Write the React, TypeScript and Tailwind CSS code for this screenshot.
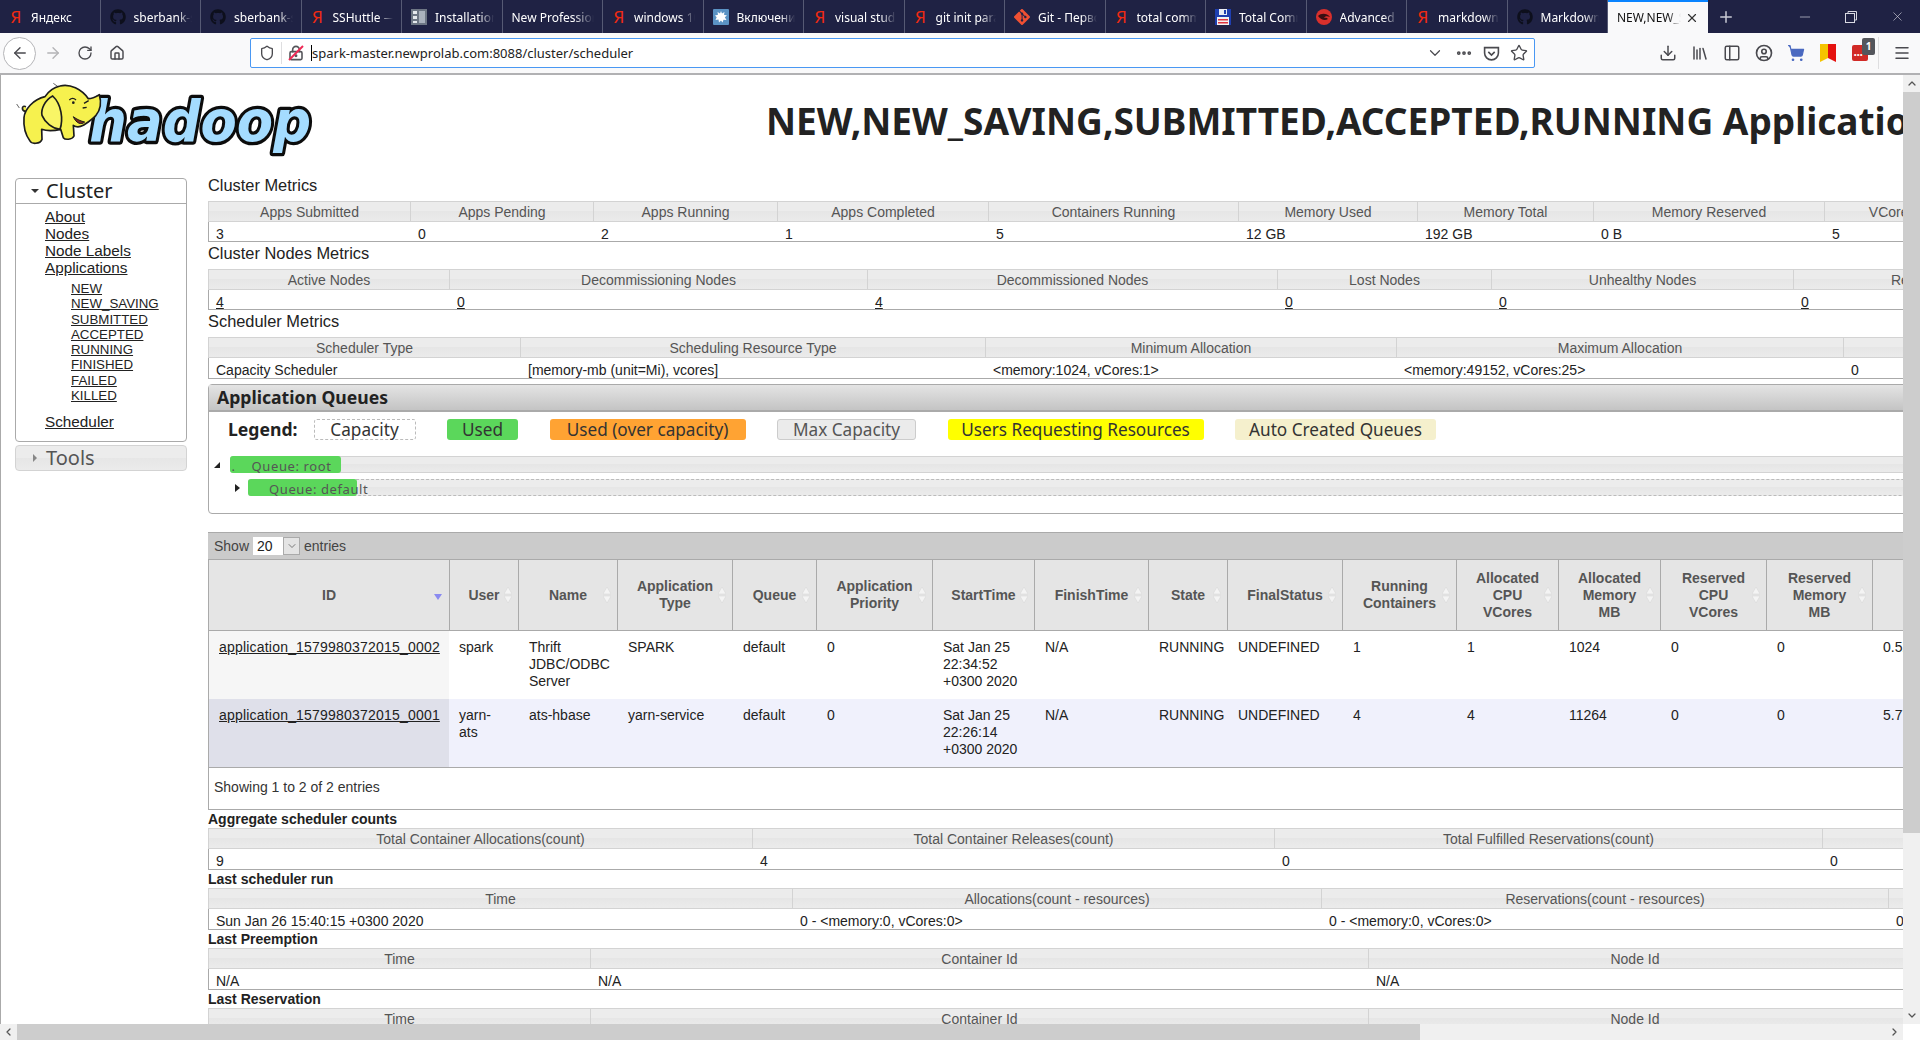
import { ReactNode } from 'react';
import {
  ArrowLeft,
  ArrowRight,
  ChevronDown,
  ChevronLeft,
  ChevronRight,
  ChevronUp,
  CircleUser,
  Download,
  Ellipsis,
  Home,
  Library,
  LockKeyhole,
  Menu,
  Minus,
  PanelLeft,
  Plus,
  RotateCw,
  Shield,
  ShoppingCart,
  Star,
  X,
} from 'lucide-react';
import { FaGithub } from 'react-icons/fa';
import { SiGit } from 'react-icons/si';

type TabIcon = 'ya' | 'gh' | 'docs' | 'none' | 'splash' | 'git' | 'floppy' | 'adv';

const tabs: { title: string; icon: TabIcon }[] = [
  { title: 'Яндекс', icon: 'ya' },
  { title: 'sberbank-school', icon: 'gh' },
  { title: 'sberbank-school', icon: 'gh' },
  { title: 'SSHuttle — documentation', icon: 'ya' },
  { title: 'Installation guide', icon: 'docs' },
  { title: 'New Profession', icon: 'none' },
  { title: 'windows 10 terminal', icon: 'ya' },
  { title: 'Включение подсистемы', icon: 'splash' },
  { title: 'visual studio code', icon: 'ya' },
  { title: 'git init parameters', icon: 'ya' },
  { title: 'Git - Первоначальная', icon: 'git' },
  { title: 'total commander', icon: 'ya' },
  { title: 'Total Commander', icon: 'floppy' },
  { title: 'Advanced tips', icon: 'adv' },
  { title: 'markdown syntax', icon: 'ya' },
  { title: 'Markdown guide', icon: 'gh' },
];

function TabGlyph({ icon }: { icon: TabIcon }) {
  if (icon === 'ya') return <span className="w-[14px] flex-none text-center text-[17px] leading-none text-[#f02a12]">Я</span>;
  if (icon === 'gh') return <FaGithub className="h-4 w-4 flex-none text-[#0d0f1c]" />;
  if (icon === 'git') return <SiGit className="h-4 w-4 flex-none text-[#f05033]" />;
  if (icon === 'docs') {
    return (
      <svg viewBox="0 0 16 16" className="h-4 w-4 flex-none">
        <rect width="16" height="16" fill="#6d7684" />
        <rect x="2" y="2" width="4" height="3" fill="#e6e9ee" />
        <rect x="2" y="7" width="4" height="3" fill="#e6e9ee" />
        <rect x="2" y="12" width="4" height="2" fill="#e6e9ee" />
        <rect x="8" y="2" width="6" height="12" fill="#aab2bd" />
      </svg>
    );
  }
  if (icon === 'splash') {
    return (
      <svg viewBox="0 0 16 16" className="h-4 w-4 flex-none">
        <rect width="16" height="16" rx="1" fill="#5b93c4" />
        <path d="M8 2l1 2.5L11.500 3l-.5 2.800L14 6.500l-2.200 1.700L13.500 11l-3-.3L9.500 13.500 8 11.500 6 13.500l-.5-3L2.500 11l1.200-2.800L2 6.500l3-.7L4.500 3 7 4.500z" fill="#fff" />
      </svg>
    );
  }
  if (icon === 'floppy') {
    return (
      <svg viewBox="0 0 16 16" className="h-4 w-4 flex-none">
        <rect width="16" height="16" fill="#1f3fb0" />
        <rect x="4" y="0" width="8" height="6" fill="#e8ecf5" />
        <rect x="9" y="1" width="2" height="4" fill="#1f3fb0" />
        <rect x="2" y="8" width="12" height="8" fill="#f2f2f2" />
        <rect x="3" y="10" width="10" height="1.500" fill="#e0343f" />
        <rect x="3" y="13" width="10" height="1.500" fill="#e0343f" />
      </svg>
    );
  }
  if (icon === 'adv') {
    return (
      <svg viewBox="0 0 16 16" className="h-4 w-4 flex-none">
        <circle cx="8" cy="8" r="8" fill="#d9302c" />
        <path d="M2 7c3-3 9-3 12 1-3-1.500-5-1-6 1 2-.5 3 0 4 1-3 2-7 1-10-3z" fill="#3b0f12" />
      </svg>
    );
  }
  return null;
}

function TabBar() {
  return (
    <div className="flex h-[33px] flex-none items-stretch bg-[#1f2244] font-['Noto_Sans',sans-serif] text-[12px] text-white">
      {tabs.map((tab, i) => (
        <div key={i} className="flex w-[100.500px] flex-none items-center gap-[8px] border-r border-[#565a74] pl-[9px] pr-2">
          <TabGlyph icon={tab.icon} />
          <span className="min-w-0 flex-1 overflow-hidden whitespace-nowrap pt-[2px] [mask-image:linear-gradient(to_right,black_75%,transparent)]">
            {tab.title}
          </span>
        </div>
      ))}
      <div className="flex w-[100px] flex-none items-center border-t-2 border-[#0a84ff] bg-[#f9f9fa] pl-[9px] pr-[9px] text-[#111]">
        <span className="min-w-0 flex-1 overflow-hidden whitespace-nowrap [mask-image:linear-gradient(to_right,black_80%,transparent)]">
          NEW,NEW_SAVING
        </span>
        <X className="ml-1 h-[14px] w-[14px] flex-none text-[#333]" />
      </div>
      <div className="flex w-[35px] flex-none items-center justify-center">
        <Plus className="h-[18px] w-[18px] text-[#c9cad4]" />
      </div>
      <div className="ml-auto flex flex-none items-center text-[#d8d9e2]">
        <div className="flex w-[46px] justify-center"><Minus className="h-4 w-4" strokeWidth={1} /></div>
        <div className="flex w-[46px] justify-center">
          <svg viewBox="0 0 12 12" className="h-3 w-3" fill="none" stroke="currentColor">
            <rect x="0.500" y="2.500" width="9" height="9" />
            <path d="M3 2.500V.500h8.500V9H9.500" />
          </svg>
        </div>
        <div className="flex w-[46px] justify-center"><X className="h-[15px] w-[15px]" strokeWidth={1} /></div>
      </div>
    </div>
  );
}

function NavBar() {
  return (
    <div className="flex h-[42px] flex-none items-center border-b-2 border-[#b1b1b3] bg-[#f9f9fa] text-[#4a4a4f]">
      <div className="ml-[3px] flex h-[33px] w-[33px] flex-none items-center justify-center rounded-full border border-[#b5b5b8] bg-white">
        <ArrowLeft className="h-[18px] w-[18px]" strokeWidth={1.8} />
      </div>
      <ArrowRight className="ml-[8px] h-[18px] w-[18px] flex-none text-[#b4b4b6]" strokeWidth={1.8} />
      <RotateCw className="ml-[15px] h-4 w-4 flex-none" strokeWidth={2} />
      <Home className="ml-[16px] h-4 w-4 flex-none" strokeWidth={2.2} />

      {/* адресная строка */}
      <div className="ml-[125px] flex h-[30px] w-[1285px] flex-none items-center rounded-[2px] border border-[#4a98f3] bg-white">
        <Shield className="ml-[8px] h-4 w-4 flex-none" strokeWidth={2} />
        <div className="ml-[6px] h-[22px] w-px flex-none bg-[#dedee0]" />
        <div className="relative ml-[6px] h-4 w-4 flex-none">
          <LockKeyhole className="h-4 w-4 text-[#55555a]" strokeWidth={2.4} />
          <svg viewBox="0 0 16 16" className="absolute inset-0 h-4 w-4">
            <line x1="1" y1="15" x2="15" y2="1" stroke="#ee2a55" strokeWidth="2" />
          </svg>
        </div>
        <span className="ml-[7px] h-[16px] w-px flex-none bg-black" />
        <span className="pt-[2px] font-['Noto_Sans',sans-serif] text-[13px] text-[#222]">spark-master.newprolab.com:8088/cluster/scheduler</span>
        <ChevronDown className="ml-auto h-[18px] w-[18px] flex-none" strokeWidth={1.6} />
        <Ellipsis className="ml-[11px] h-[18px] w-[18px] flex-none" strokeWidth={3} />
        <svg viewBox="0 0 16 16" className="ml-[10px] h-[17px] w-[17px] flex-none" fill="none" stroke="currentColor" strokeWidth="1.500">
          <path d="M1.500 2.500h13v5a6.500 6.500 0 0 1-13 0z" />
          <path d="M5 6.500l3 3 3-3" />
        </svg>
        <Star className="ml-[10px] mr-[6px] h-[18px] w-[18px] flex-none" strokeWidth={1.8} />
      </div>

      <Download className="ml-[124px] h-[18px] w-[18px] flex-none" strokeWidth={2} />
      <Library className="ml-[14px] h-[18px] w-[18px] flex-none" strokeWidth={2} />
      <PanelLeft className="ml-[14px] h-[18px] w-[18px] flex-none" strokeWidth={2} />
      <CircleUser className="ml-[14px] h-[18px] w-[18px] flex-none" strokeWidth={2.2} />
      <ShoppingCart className="ml-[14px] h-[18px] w-[18px] flex-none text-[#4a69c0]" fill="#4a69c0" strokeWidth={1.6} />
      <svg viewBox="0 0 16 18" className="ml-[15px] h-[18px] w-4 flex-none">
        <path d="M0 0h8v14l-8 4z" fill="#f5c400" />
        <path d="M8 0h8v18l-8-4z" fill="#e5120f" />
      </svg>
      <div className="relative ml-[16px] h-4 w-4 flex-none rounded-[2px] bg-[#d12a26]">
        <span className="absolute left-[2px] top-[6px] text-[7px] font-bold leading-none tracking-[0.5px] text-white">•••</span>
        <span className="absolute -right-[7px] -top-[7px] flex h-[17px] w-[13px] items-center justify-center rounded-[2px] bg-[#54565c] font-['Noto_Sans',sans-serif] text-[10px] font-bold text-white">1</span>
      </div>
      <div className="ml-[10px] h-[32px] w-px flex-none bg-[#dedee0]" />
      <Menu className="ml-[14px] h-[18px] w-[18px] flex-none" strokeWidth={2} />
    </div>
  );
}

function HadoopLogo() {
  return (
    <svg viewBox="0 0 930 252" className="ml-[9px] mt-[1px] h-[84px] w-[310px] flex-none">
      {/* хвост */}
      <path d="M48 92c-14-6-14 12-2 14l4 18" fill="#f4ef4a" stroke="#222" strokeWidth="5" />
      <path d="M20 84l8 12M130 22l14 10" stroke="#666" strokeWidth="3" />
      {/* надпись */}
      <text
        x="238"
        y="195"
        fontFamily="'DejaVu Sans', sans-serif"
        fontWeight="700"
        fontStyle="italic"
        fontSize="172"
        textLength="665"
        lengthAdjust="spacingAndGlyphs"
        fill="#a4dcff"
        stroke="#0c0c0c"
        strokeWidth="20"
        strokeLinejoin="round"
        paintOrder="stroke"
      >
        hadoop
      </text>
      {/* тело */}
      <path
        d="M150 30C180 22 215 40 235 68C245 68 258 62 268 56C275 80 272 100 258 118C245 132 232 140 220 148C212 152 200 155 190 148L192 180C186 192 165 192 160 185L152 160C130 165 110 165 95 160L96 190C90 205 65 205 60 195C45 175 40 150 42 125C44 100 70 70 105 62C118 42 132 34 150 30Z"
        fill="#f6f14e"
        stroke="#1c1c1c"
        strokeWidth="5"
        strokeLinejoin="round"
      />
      {/* ухо */}
      <path d="M128 60C105 72 92 100 96 118C105 140 128 158 150 160C160 130 155 85 128 60Z" fill="#f9f566" stroke="#1c1c1c" strokeWidth="5" />
      <path d="M178 72c6-6 14-6 20 0M222 82l14-8M218 96l12-2" stroke="#1c1c1c" strokeWidth="4" fill="none" />
      <circle cx="190" cy="80" r="4" fill="#1c1c1c" />
      <path d="M190 122c8 20 24 26 34 16-10-2-24-8-34-16z" fill="#7b2b1c" stroke="#1c1c1c" strokeWidth="3" />
    </svg>
  );
}

function Sidebar() {
  return (
    <div className="ml-[14px] mt-[4px] w-[172px] flex-none">
      <div className="rounded-[4px] border border-[#aaa] pb-[11px]">
        <div className="flex h-[25px] items-center border-b border-[#aaa] pl-[15px] font-['Noto_Sans',sans-serif] text-[20px] text-[#222]">
          <span className="mr-[7px] h-0 w-0 border-x-[4px] border-t-[4px] border-x-transparent border-t-[#333]" />
          Cluster
        </div>
        <ul className="ml-[29px] mt-[4px] text-[15.300px] leading-[17px] text-[#222]">
          <li className="underline">About</li>
          <li className="underline">Nodes</li>
          <li className="underline">Node Labels</li>
          <li className="underline">Applications</li>
          <ul className="ml-[26px] mt-[5px] text-[13.300px] leading-[15.300px]">
            {['NEW', 'NEW_SAVING', 'SUBMITTED', 'ACCEPTED', 'RUNNING', 'FINISHED', 'FAILED', 'KILLED'].map((s) => (
              <li key={s} className="underline">{s}</li>
            ))}
          </ul>
          <li className="mt-[10px] underline">Scheduler</li>
        </ul>
      </div>
      <div className="mt-[3px] flex h-[26px] items-center rounded-[4px] border border-[#d3d3d3] bg-[linear-gradient(#ececec_50%,#e6e6e6_50%,#ebebeb)] pl-[17px] font-['Noto_Sans',sans-serif] text-[20px] text-[#555]">
        <span className="mr-[9px] h-0 w-0 border-y-[4px] border-l-[4px] border-y-transparent border-l-[#888]" />
        Tools
      </div>
    </div>
  );
}

interface MetricTableProps {
  cols: string;
  heads: string[];
  cells: ReactNode[];
  compact?: boolean;
}

const link = (v: string) => <span className="underline">{v}</span>;

function MetricTable({ cols, heads, cells, compact }: MetricTableProps) {
  return (
    <div className="text-[14px]">
      <div className={`grid h-[21px] border-y border-[#d3d3d3] bg-[linear-gradient(#ececec_45%,#e6e6e6_50%,#ebebeb)] text-[#555] ${cols}`}>
        {heads.map((h, i) => (
          <div key={i} className="overflow-hidden whitespace-nowrap border-l border-[#d3d3d3] pt-[1px] text-center leading-[18px]">{h}</div>
        ))}
      </div>
      <div className={`grid border-b border-l border-[#aaa] text-[#222] ${compact ? 'h-[20px]' : 'h-[21px]'} ${cols}`}>
        {cells.map((c, i) => (
          <div key={i} className="overflow-hidden whitespace-nowrap pl-[7px] pt-[3px] leading-[18px]">{c}</div>
        ))}
      </div>
    </div>
  );
}

function Legend({ className, label }: { className: string; label: string }) {
  return <div className={`flex h-[21px] flex-none items-center justify-center whitespace-nowrap rounded-[3px] ${className}`}>{label}</div>;
}

function QueuesPanel() {
  return (
    <div className="mt-[5px] h-[130px] rounded-[4px] border border-[#aaa] font-['Noto_Sans',sans-serif]">
      <div className="flex h-[27px] items-center border-b-2 border-[#aaa] bg-[linear-gradient(#e4e4e4,#c4c4c4)] pl-[8px] text-[17.600px] font-bold text-[#222]">
        Application Queues
      </div>
      <div className="mt-[7px] flex h-[21px] items-center gap-[31.500px] pl-[19px] text-[17.200px] leading-[21px] text-[#333]">
        <span className="-mr-[17px] w-[71px] text-[17.600px] font-bold text-[#222]">Legend:</span>
        <Legend className="w-[102px] border border-dashed border-[#bbb]" label="Capacity" />
        <Legend className="w-[71px] bg-[#5bd75b]" label="Used" />
        <Legend className="w-[196px] bg-[#ffa333]" label="Used (over capacity)" />
        <Legend className="w-[139px] border border-[#ccc] bg-[#ebebeb] text-[#555]" label="Max Capacity" />
        <Legend className="w-[256px] bg-[#ffff00]" label="Users Requesting Resources" />
        <Legend className="w-[201px] bg-[#f5f0cd]" label="Auto Created Queues" />
      </div>

      {/* дерево очередей */}
      <div className="mt-[16px] flex h-[17px] items-center text-[13px] tracking-[0.6px] text-[#555]">
        <span className="ml-[5px] h-0 w-0 border-b-[6px] border-l-[6px] border-b-[#222] border-l-transparent" />
        <div className="relative ml-[9.500px] h-[17px] flex-1 rounded-[3px] border border-[#d3d3d3] bg-[linear-gradient(#ececec_50%,#e6e6e6_50%,#ebebeb)]">
          <div className="absolute -inset-y-px -left-px w-[111px] rounded-[3px] bg-[#5bd75b]" />
          <span className="relative ml-[1px] leading-[15px]">.</span>
          <span className="relative ml-[16px] leading-[15px]">Queue: root</span>
        </div>
      </div>
      <div className="mt-[6px] flex h-[17px] items-center text-[13px] tracking-[0.6px] text-[#555]">
        <span className="ml-[26px] h-0 w-0 border-y-[4px] border-l-[5px] border-y-transparent border-l-[#222]" />
        <div className="relative ml-[8px] h-[17px] flex-1 rounded-[3px] border border-dashed border-[#bbb] bg-[linear-gradient(#ececec_50%,#e6e6e6_50%,#ebebeb)]">
          <div className="absolute -inset-y-px -left-px w-[109px] rounded-[3px] bg-[#5bd75b]" />
          <span className="relative ml-[20px] leading-[15px]">Queue: default</span>
        </div>
      </div>
    </div>
  );
}

const appCols =
  'grid-cols-[241px_69px_99px_115px_84px_116px_102px_114px_79px_115px_114px_102px_102px_106px_106px_200px]';

const appHeads = [
  'ID',
  'User',
  'Name',
  'Application\nType',
  'Queue',
  'Application\nPriority',
  'StartTime',
  'FinishTime',
  'State',
  'FinalStatus',
  'Running\nContainers',
  'Allocated\nCPU\nVCores',
  'Allocated\nMemory\nMB',
  'Reserved\nCPU\nVCores',
  'Reserved\nMemory\nMB',
  '% of\nQueue',
];

const appRows = [
  ['application_1579980372015_0002', 'spark', 'Thrift JDBC/ODBC Server', 'SPARK', 'default', '0', 'Sat Jan 25 22:34:52 +0300 2020', 'N/A', 'RUNNING', 'UNDEFINED', '1', '1', '1024', '0', '0', '0.52'],
  ['application_1579980372015_0001', 'yarn-ats', 'ats-hbase', 'yarn-service', 'default', '0', 'Sat Jan 25 22:26:14 +0300 2020', 'N/A', 'RUNNING', 'UNDEFINED', '4', '4', '11264', '0', '0', '5.77'],
];

function SortIcon({ active }: { active?: boolean }) {
  if (active) {
    return <span className="absolute bottom-[30px] right-[7px] h-0 w-0 border-x-[4px] border-t-[6px] border-x-transparent border-t-[#8a8af0]" />;
  }
  return (
    <svg viewBox="0 0 8 16" className="absolute right-[6px] top-1/2 h-4 w-2 -translate-y-1/2" fill="#f4f4f4" stroke="#d6d6d6" strokeWidth="0.500">
      <path d="M4 0l4 7H0zM4 16l4-7H0z" />
    </svg>
  );
}

function AppsTable() {
  return (
    <div className="mt-[18px] text-[14px]">
      <div className="flex h-[27px] items-center gap-[4px] border-t border-[#aaa] bg-[#cbcbcb] pl-[6px] text-[#444]">
        Show
        <div className="flex h-[18px] flex-none">
          <span className="w-[30px] bg-white pl-[4px] leading-[18px] text-[#222]">20</span>
          <span className="flex w-[17px] items-center justify-center border border-[#aaa] bg-[#e4e4e4]">
            <ChevronDown className="h-3 w-3 text-[#555]" strokeWidth={1.500} />
          </span>
        </div>
        entries
      </div>
      <div className={`grid h-[72px] border-y border-[#aaa] bg-[#e5e5e5] font-bold leading-[17px] text-[#555] ${appCols}`}>
        {appHeads.map((h, i) => (
          <div key={h} className="relative flex items-center justify-center whitespace-pre-line border-l border-[#aaa] text-center">
            {h}
            {i < 15 && <SortIcon active={i === 0} />}
          </div>
        ))}
      </div>
      {appRows.map((row, r) => (
        <div key={row[0]} className={`grid h-[68px] leading-[17px] text-[#222] ${appCols} ${r === 1 ? 'bg-[#f0f1fc]' : 'bg-white'}`}>
          {row.map((c, i) => (
            <div
              key={i}
              className={`pr-[10px] pt-[8px] ${i < 2 ? 'pl-[10px]' : 'pl-[11px]'} ${i === 0 ? `whitespace-nowrap border-l border-[#aaa] tracking-[0.200px] underline ${r === 1 ? 'bg-[#dfe0ea]' : 'bg-[#f6f6f6]'}` : ''}`}
            >
              {c}
            </div>
          ))}
        </div>
      ))}
      <div className="h-[43px] border-y border-l border-[#aaa] pl-[5px] pt-[11px] leading-[17px] text-[#333]">
        Showing 1 to 2 of 2 entries
      </div>
    </div>
  );
}

function SmallTitle({ children }: { children: ReactNode }) {
  return <div className="h-[18px] text-[14px] font-bold leading-[19px] text-[#222]">{children}</div>;
}

function SectionTitle({ children }: { children: ReactNode }) {
  return <div className="mb-[5px] h-[22px] text-[16.400px] leading-[22px] text-[#222]">{children}</div>;
}

function Main() {
  return (
    <div className="ml-[21px] w-[2400px] flex-none">
      <SectionTitle>Cluster Metrics</SectionTitle>
      <MetricTable
        compact
        cols="grid-cols-[202px_183px_184px_211px_250px_179px_176px_231px_172px]"
        heads={['Apps Submitted', 'Apps Pending', 'Apps Running', 'Apps Completed', 'Containers Running', 'Memory Used', 'Memory Total', 'Memory Reserved', 'VCores Used']}
        cells={['3', '0', '2', '1', '5', '12 GB', '192 GB', '0 B', '5']}
      />
      <SectionTitle>Cluster Nodes Metrics</SectionTitle>
      <MetricTable
        compact
        cols="grid-cols-[241px_418px_410px_214px_302px_300px]"
        heads={['Active Nodes', 'Decommissioning Nodes', 'Decommissioned Nodes', 'Lost Nodes', 'Unhealthy Nodes', 'Rebooted Nodes']}
        cells={[link('4'), link('0'), link('4'), link('0'), link('0'), link('0')]}
      />
      <SectionTitle>Scheduler Metrics</SectionTitle>
      <MetricTable
        cols="grid-cols-[312px_465px_411px_447px_300px]"
        heads={['Scheduler Type', 'Scheduling Resource Type', 'Minimum Allocation', 'Maximum Allocation', '']}
        cells={['Capacity Scheduler', '[memory-mb (unit=Mi), vcores]', '<memory:1024, vCores:1>', '<memory:49152, vCores:25>', '0']}
      />
      <QueuesPanel />
      <AppsTable />
      <SmallTitle>Aggregate scheduler counts</SmallTitle>
      <MetricTable
        cols="grid-cols-[544px_522px_548px_200px]"
        heads={['Total Container Allocations(count)', 'Total Container Releases(count)', 'Total Fulfilled Reservations(count)', '']}
        cells={['9', '4', '0', '0']}
      />
      <SmallTitle>Last scheduler run</SmallTitle>
      <MetricTable
        cols="grid-cols-[584px_529px_567px_200px]"
        heads={['Time', 'Allocations(count - resources)', 'Reservations(count - resources)', '']}
        cells={['Sun Jan 26 15:40:15 +0300 2020', '0 - <memory:0, vCores:0>', '0 - <memory:0, vCores:0>', '0']}
      />
      <SmallTitle>Last Preemption</SmallTitle>
      <MetricTable
        cols="grid-cols-[382px_778px_533px]"
        heads={['Time', 'Container Id', 'Node Id']}
        cells={['N/A', 'N/A', 'N/A']}
      />
      <SmallTitle>Last Reservation</SmallTitle>
      <MetricTable
        cols="grid-cols-[382px_778px_533px]"
        heads={['Time', 'Container Id', 'Node Id']}
        cells={['N/A', 'N/A', 'N/A']}
      />
    </div>
  );
}

export default function App() {
  return (
    <div className="flex h-[1040px] w-[1920px] flex-col overflow-hidden bg-white font-['Liberation_Sans',Arial,sans-serif]">
      <TabBar />
      <NavBar />
      <div className="flex min-h-0 flex-1">
        <div className="flex min-w-0 flex-1 flex-col">
          <div className="min-h-0 flex-1 overflow-hidden border-l border-[#aaa]">
            <div className="flex h-[99px] items-start">
              <HadoopLogo />
              <h1 className="ml-[446px] mt-[24px] flex-none whitespace-nowrap font-['Noto_Sans',sans-serif] text-[37px] font-bold leading-[44px] text-[#222]">
                NEW,NEW_SAVING,SUBMITTED,ACCEPTED,RUNNING Applications
              </h1>
            </div>
            <div className="flex items-start">
              <Sidebar />
              <Main />
            </div>
          </div>
          {/* горизонтальный скролл */}
          <div className="flex h-4 flex-none items-center bg-[#f0f0f0] text-[#555]">
            <ChevronLeft className="w-[17px] flex-none" size={12} strokeWidth={2.5} />
            <div className="h-4 w-[1403px] flex-none bg-[#cdcdcd]" />
            <ChevronRight className="ml-auto w-[17px] flex-none" size={12} strokeWidth={2.5} />
          </div>
        </div>
        {/* вертикальный скролл */}
        <div className="flex w-[17px] flex-none flex-col items-center bg-[#f0f0f0] text-[#555]">
          <ChevronUp className="h-[17px] flex-none" size={12} strokeWidth={2.5} />
          <div className="h-[741px] w-full flex-none bg-[#cdcdcd]" />
          <ChevronDown className="mt-auto h-[17px] flex-none" size={12} strokeWidth={2.5} />
          <div className="h-4 w-full flex-none bg-white" />
        </div>
      </div>
    </div>
  );
}
